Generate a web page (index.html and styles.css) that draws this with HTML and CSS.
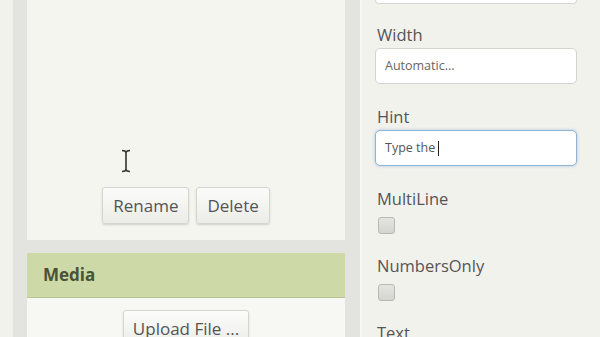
FILE: index.html
```html
<!DOCTYPE html>
<html>
<head>
  <title>Designer</title>
  <link rel="stylesheet" href="styles.css">
</head>
<body>
  <div class="page">
    <div class="sidebar">
      <div class="panel assets">
        <div class="cursor">
          <svg width="12" height="24" viewBox="0 0 12 24">
            <path d="M2 1.5 Q6 1.5 6 4 Q6 1.5 10 1.5 M6 4 V20 M2 22.5 Q6 22.5 6 20 Q6 22.5 10 22.5" fill="none" stroke="#333" stroke-width="1.6"/>
          </svg>
        </div>
        <div class="btn-row">
          <button class="btn">Rename</button>
          <button class="btn">Delete</button>
        </div>
      </div>
      <div class="panel media">
        <div class="panel-head">Media</div>
        <div class="btn-row upload">
          <button class="btn">Upload File ...</button>
        </div>
      </div>
    </div>

    <div class="props">
      <div class="top-box"></div>

      <div class="prop">
        <div class="label">Width</div>
        <div class="field">Automatic...</div>
      </div>

      <div class="prop">
        <div class="label">Hint</div>
        <div class="field focus">Type the <span class="caret"></span></div>
      </div>

      <div class="prop bool">
        <div class="label">MultiLine</div>
        <div class="check"></div>
      </div>

      <div class="prop bool">
        <div class="label">NumbersOnly</div>
        <div class="check"></div>
      </div>

      <div class="prop">
        <div class="label">Text</div>
      </div>
    </div>
  </div>
</body>
</html>
```

FILE: styles.css
```css
html, body {
  margin: 0;
  padding: 0;
  height: 100%;
  overflow: hidden;
}

body {
  font-family: "Open Sans", "DejaVu Sans", sans-serif;
  background-color: #f2f2ed;
  color: #555;
}

.page {
  display: flex;
  height: 337px;
}

/* linke Spalte mit den Panels */
.sidebar {
  flex-shrink: 0;
  margin-left: 13px;
  width: 318px;
  background-color: #e3e3df;
  padding: 0 15px 0 14px;
  border-right: 2px solid #f7f7f3;
  display: flex;
  flex-direction: column;
  gap: 13px;
}

.panel {
  background-color: #f5f5f0;
}

.assets {
  flex-shrink: 0;
  height: 240px;
  display: flex;
  flex-direction: column;
  align-items: center;
  position: relative;
}

.cursor {
  position: absolute;
  left: 93px;
  top: 149px;
}

.btn-row {
  display: flex;
  justify-content: center;
  gap: 7px;
}

.assets .btn-row {
  margin-top: 187px;
}

.btn {
  font-family: "Open Sans", "DejaVu Sans", sans-serif;
  font-size: 17px;
  color: #555;
  height: 37px;
  padding: 0 10px;
  background: linear-gradient(#fcfcfa, #ebebe7);
  border: 1px solid #d6d6d1;
  border-radius: 3px;
  box-shadow: 0 1px 2px rgba(0, 0, 0, 0.15);
}

.media {
  flex: 1;
  background-color: #f7f7f3;
}

.panel-head {
  background-color: #cdd9a6;
  height: 44px;
  border-bottom: 1px solid #b9c394;
  padding-left: 16px;
  font-size: 17px;
  font-weight: bold;
  color: #4b5236;
  line-height: 44px;
}

.upload {
  margin-top: 12px;
}

.upload .btn {
  padding: 0 9px;
}

/* rechte Spalte: Eigenschaften */
.props {
  flex: 1;
  padding-left: 13px;
}

.top-box {
  width: 200px;
  height: 3px;
  border: 1px solid #d6d6d1;
  border-top: none;
  border-radius: 0 0 4px 4px;
  background-color: #fff;
  margin-bottom: 21px;
}

.prop {
  margin-bottom: 23px;
}

.prop.bool {
  margin-bottom: 22px;
}

.label {
  font-size: 16.5px;
  line-height: 20px;
  color: #555;
  margin-bottom: 3px;
  padding-left: 2px;
}

.bool .label {
  margin-bottom: 8px;
}

.field {
  width: 191px;
  height: 34px;
  border: 1px solid #d4d4cf;
  border-radius: 5px;
  background-color: #fff;
  padding-left: 9px;
  font-size: 12.5px;
  line-height: 34px;
  color: #666;
}

.field.focus {
  border-color: #8fb4d6;
  box-shadow: 0 0 3px rgba(90, 150, 210, 0.5);
  color: #555;
}

.caret {
  display: inline-block;
  width: 1px;
  height: 15px;
  background-color: #222;
  vertical-align: middle;
}

.check {
  width: 15px;
  height: 15px;
  margin-left: 3px;
  border: 1px solid #b8b8b4;
  border-radius: 3px;
  background: linear-gradient(#e4e4e0, #d4d4d0);
}
```
